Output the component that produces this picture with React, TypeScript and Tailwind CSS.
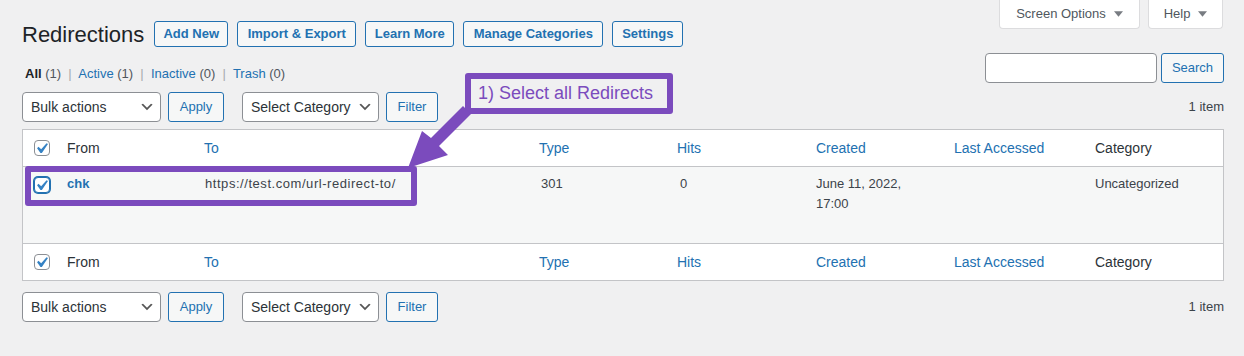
import React from "react";

const purple = "#7b4bbd";

const Check: React.FC<{ focused?: boolean }> = ({ focused }) => (
  <div
    className={
      "relative w-[16px] h-[16px] rounded-[4px] bg-white border " +
      (focused
        ? "border-[#2271b1] shadow-[0_0_0_1px_#2271b1]"
        : "border-[#8c8f94]")
    }
  >
    <svg
      viewBox="0 0 20 20"
      className="absolute left-[-4px] top-[-3px] w-[21px] h-[21px]"
    >
      <path
        d="M14.83 4.89l1.34.94-5.81 8.38H9.02L5.78 9.67l1.34-1.25 2.57 2.4z"
        fill="#3582c4"
      />
    </svg>
  </div>
);

const Chevron = () => (
  <svg viewBox="0 0 20 20" className="w-[16px] h-[16px]">
    <path d="M5 6l5 5 5-5 2 1-7 7-7-7 2-1z" fill="#555" />
  </svg>
);

const Select: React.FC<{ label: string; width: string }> = ({ label, width }) => (
  <div
    className={
      "h-[30px] flex items-center justify-between pl-[8px] pr-[5px] bg-white border border-[#8c8f94] rounded-[4px] text-[14px] text-[#2c3338] " +
      width
    }
  >
    <span>{label}</span>
    <Chevron />
  </div>
);

const SecondaryButton: React.FC<{ label: string; width: string }> = ({
  label,
  width,
}) => (
  <div
    className={
      "h-[30px] flex items-center justify-center bg-[#f6f7f7] border border-[#2271b1] rounded-[3px] text-[13px] text-[#2271b1] " +
      width
    }
  >
    {label}
  </div>
);

const TableNav: React.FC = () => (
  <div className="flex items-center justify-between h-[30px]">
    <div className="flex items-center">
      <Select label="Bulk actions" width="w-[139px]" />
      <div className="ml-[7px]">
        <SecondaryButton label="Apply" width="w-[56px]" />
      </div>
      <div className="ml-[18px]">
        <Select label="Select Category" width="w-[137px]" />
      </div>
      <div className="ml-[7px]">
        <SecondaryButton label="Filter" width="w-[52px]" />
      </div>
    </div>
    <span className="text-[13px] text-[#3c434a]">1 item</span>
  </div>
);

const cols = "grid grid-cols-[34px_137px_335px_138px_139px_138px_141px_1fr]";

const HeadRow: React.FC<{ border: string }> = ({ border }) => (
  <div className={cols + " h-[37px] items-center bg-white text-[14px] " + border}>
    <div className="pl-[11px]">
      <Check />
    </div>
    <div className="pl-[10px] text-[#2c3338]">From</div>
    <div className="pl-[10px] text-[#2271b1]">To</div>
    <div className="pl-[10px] text-[#2271b1]">Type</div>
    <div className="pl-[10px] text-[#2271b1]">Hits</div>
    <div className="pl-[10px] text-[#2271b1]">Created</div>
    <div className="pl-[10px] text-[#2271b1]">Last Accessed</div>
    <div className="pl-[10px] text-[#2c3338]">Category</div>
  </div>
);

const tabs = [
  { label: "Screen Options", width: "w-[141px]" },
  { label: "Help", width: "w-[75px]" },
];

export default function App() {
  return (
    <div className="relative w-[1244px] h-[356px] bg-[#f0f0f1] font-['Liberation_Sans',Arial,sans-serif] pl-[22px] pr-[20px]">
      <div className="flex justify-between">
        <div>
          <div className="flex items-center mt-[21px] h-[26px]">
            <h1 className="text-[22px] text-[#1d2327] mr-[10px]">Redirections</h1>
            <div className="flex gap-[9px]">
              {[
                ["Add New", "w-[74px]"],
                ["Import & Export", "w-[119px]"],
                ["Learn More", "w-[89px]"],
                ["Manage Categories", "w-[140px]"],
                ["Settings", "w-[71px]"],
              ].map(([label, w]) => (
                <div
                  key={label}
                  className={
                    "h-[26px] flex items-center justify-center bg-[#f6f7f7] border border-[#2271b1] rounded-[3px] text-[13px] font-semibold text-[#2271b1] " +
                    w
                  }
                >
                  {label}
                </div>
              ))}
            </div>
          </div>
          <div className="mt-[18px] h-[18px] leading-[18px] pl-[3px] text-[13px] text-[#50575e] whitespace-pre">
            <span className="font-bold text-[#1d2327]">All</span> (1)
            <span className="text-[#a7aaad]">  |  </span>
            <span className="text-[#2271b1]">Active</span> (1)
            <span className="text-[#a7aaad]">  |  </span>
            <span className="text-[#2271b1]">Inactive</span> (0)
            <span className="text-[#a7aaad]">  |  </span>
            <span className="text-[#2271b1]">Trash</span> (0)
          </div>
        </div>
        <div className="flex flex-col items-end">
          <div className="flex gap-[8px] pr-[1px]">
            {tabs.map((t) => (
              <div
                key={t.label}
                className={
                  "h-[29px] flex items-center justify-center gap-[8px] bg-white border-x border-b border-[#dcdcde] rounded-b-[4px] text-[13px] text-[#50575e] " +
                  t.width
                }
              >
                <span>{t.label}</span>
                <svg viewBox="0 0 10 6" className="w-[9px] h-[6px]">
                  <path d="M0 0h10L5 6z" fill="#787c82" />
                </svg>
              </div>
            ))}
          </div>
          <div className="flex items-center gap-[4px] mt-[24px]">
            <div className="w-[172px] h-[30px] bg-white border border-[#8c8f94] rounded-[4px]" />
            <SecondaryButton label="Search" width="w-[63px]" />
          </div>
        </div>
      </div>

      <div className="mt-[9px]">
        <TableNav />
      </div>

      <div className="mt-[7px] border border-[#c3c4c7]">
        <HeadRow border="border-b border-[#c3c4c7]" />
        <div className={cols + " h-[76px] bg-[#f6f7f7] text-[13px] leading-[20px] text-[#3c434a]"}>
          <div className="pl-[11px] pt-[10px]">
            <Check focused />
          </div>
          <div className="pl-[10px] pt-[7px] font-bold text-[#2271b1]">chk</div>
          <div className="pl-[11px] pt-[7px] tracking-[0.55px]">
            https://test.com/url-redirect-to/
          </div>
          <div className="pl-[12px] pt-[7px]">301</div>
          <div className="pl-[13px] pt-[7px]">0</div>
          <div className="pl-[10px] pt-[7px]">
            June 11, 2022,
            <br />
            17:00
          </div>
          <div className="pl-[10px] pt-[7px]" />
          <div className="pl-[10px] pt-[7px]">Uncategorized</div>
        </div>
        <HeadRow border="border-t border-[#c3c4c7]" />
      </div>

      <div className="mt-[11px]">
        <TableNav />
      </div>

      {/* annotation overlay */}
      <div
        className="absolute left-[465px] top-[73px] w-[208px] h-[41px] border-[6px] rounded-[3px] bg-[#f0f0f1] flex items-center pl-[7px] text-[18px]"
        style={{ borderColor: purple, color: purple }}
      >
        1) Select all Redirects
      </div>
      <div
        className="absolute left-[25px] top-[166px] w-[392px] h-[40px] border-[6px] rounded-[3px]"
        style={{ borderColor: purple }}
      />
      <svg
        className="absolute left-[400px] top-[100px] w-[90px] h-[75px]"
        viewBox="0 0 90 75"
      >
        <polygon
          points="8,68 48,55 39,46 71,14 63,6 31,38 22,31"
          fill={purple}
        />
      </svg>
    </div>
  );
}
